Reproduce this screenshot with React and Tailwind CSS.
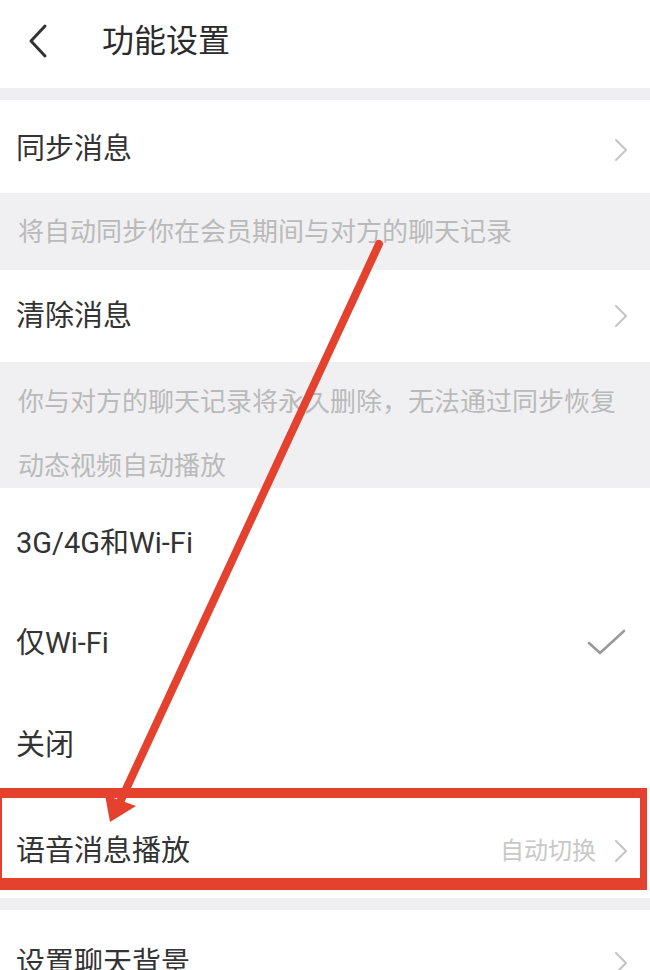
import React from "react";

const font = { fontFamily: '"Roboto", "Noto Sans CJK SC", sans-serif' };

const Chevron = () => (
  <svg width="14" height="24" viewBox="0 0 14 24" className="shrink-0">
    <path d="M2 2 L12 12 L2 22" fill="none" stroke="#c6c6c8" strokeWidth="2.2" strokeLinecap="round" strokeLinejoin="round" />
  </svg>
);

const Check = () => (
  <svg width="42" height="30" viewBox="0 0 42 30" className="shrink-0">
    <path d="M3 15 L14 25 L38 3" fill="none" stroke="#9a9a9a" strokeWidth="2.6" strokeLinecap="round" strokeLinejoin="round" />
  </svg>
);

const Row = ({ label, right, chevron, check, className = "" }) => (
  <div className={`flex items-center justify-between bg-white pl-4 pr-[22px] ${className}`}>
    <span className="text-[29px] leading-none text-[#333333]">{label}</span>
    <div className="flex items-center gap-[18px]">
      {right && <span className="text-[24px] leading-none text-[#c8c8c8]">{right}</span>}
      {chevron && <Chevron />}
      {check && <Check />}
    </div>
  </div>
);

export default function App() {
  return (
    <div className="relative w-[650px] h-[970px] overflow-hidden bg-white" style={font}>
      {/* header */}
      <div className="flex items-center h-[88px] pb-[6px] bg-white">
        <svg width="22" height="36" viewBox="0 0 22 36" className="ml-[27px]">
          <path d="M18 3 L4 18 L18 33" fill="none" stroke="#333333" strokeWidth="3" strokeLinecap="round" strokeLinejoin="round" />
        </svg>
        <span className="ml-[53px] text-[32px] leading-none text-[#2b2b2b]">功能设置</span>
      </div>
      <div className="h-[12px] bg-[#efeff2]" />

      <Row label="同步消息" chevron className="h-[93px] pt-[6px]" />
      <div className="flex items-center h-[77px] px-[18px] bg-[#f0f0f2]">
        <span className="text-[26px] leading-none text-[#bababa]">将自动同步你在会员期间与对方的聊天记录</span>
      </div>

      <Row label="清除消息" chevron className="h-[92px]" />
      <div className="h-[126px] px-[18px] pt-[22px] bg-[#f0f0f2]">
        <div className="text-[26px] leading-[36px] text-[#bababa]">你与对方的聊天记录将永久删除，无法通过同步恢复</div>
        <div className="mt-[28px] text-[26px] leading-[36px] text-[#bababa]">动态视频自动播放</div>
      </div>

      <Row label="3G/4G和Wi-Fi" className="h-[106px] pt-[4px]" />
      <Row label="仅Wi-Fi" check className="h-[98px] pr-[12px]" />
      <Row label="关闭" className="h-[106px]" />
      <Row label="语音消息播放" right="自动切换" chevron className="h-[100px] pt-[6px]" />
      <div className="h-[12px] bg-[#efeff2]" />
      <Row label="设置聊天背景" chevron className="h-[100px] pt-[6px]" />

      {/* annotation: red box */}
      <div className="absolute left-[-5px] top-[788px] w-[652px] h-[102px] border-x-[7px] border-t-[10px] border-b-[12px] border-[#e4422f]" />

      {/* annotation: red arrow */}
      <svg className="absolute left-0 top-0 pointer-events-none" width="650" height="970" viewBox="0 0 650 970">
        <line x1="379" y1="244" x2="121" y2="800" stroke="#e4422f" strokeWidth="8" strokeLinecap="round" />
        <polygon points="110,822 105,795 136,806" fill="#e4422f" />
      </svg>
    </div>
  );
}
